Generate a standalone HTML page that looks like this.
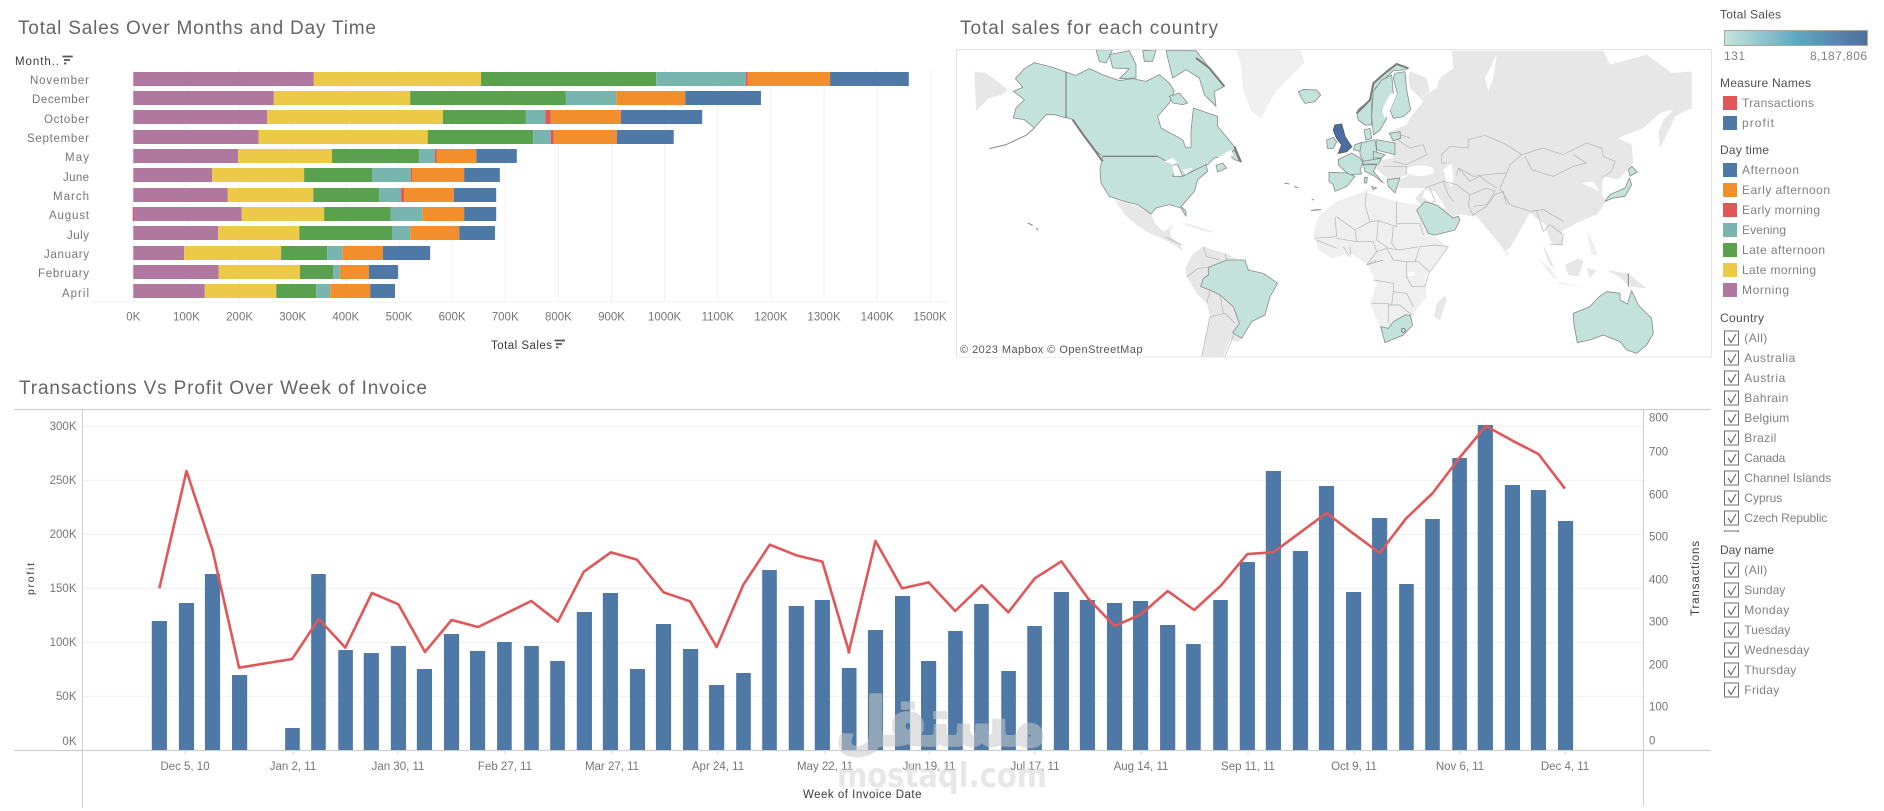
<!DOCTYPE html>
<html lang="en"><head><meta charset="utf-8"><title>Sales Dashboard</title>
<style>
html,body{margin:0;padding:0;background:#fff;width:1884px;height:811px;overflow:hidden}
svg{display:block}
text{font-family:"Liberation Sans",sans-serif;font-size:11.5px;fill:#666}
.t{font-size:19px;fill:#666}
.h{font-size:12px;fill:#4f4f4f}
.k{font-size:12px;fill:#808080}
.a{font-size:11.5px;fill:#757575}
.d{font-size:11.5px;fill:#3a3a3a}
.ns{vector-effect:non-scaling-stroke}
.m *{vector-effect:non-scaling-stroke}
.g{fill:#e7e7e7;stroke:none}
.l{fill:#efefef;stroke:none}
.w{fill:#fff;stroke:none}
.c{fill:#c3e2da;stroke:#8a8a8a;stroke-width:.8;stroke-linejoin:round}
.b{fill:none;stroke:#b4b4b4;stroke-width:.7}
.e{fill:none;stroke:#7a7a7a;stroke-width:2}
.cb{fill:#fff;stroke:#6d6d6d;stroke-width:1}
.ck{fill:none;stroke:#6d6d6d;stroke-width:1.2}
</style></head>
<body>
<svg width="1884" height="811" viewBox="0 0 1884 811" xmlns="http://www.w3.org/2000/svg">
<defs><linearGradient id="gr" x1="0" x2="1" y1="0" y2="0"><stop offset="0" stop-color="#c6e4dc"/><stop offset=".5" stop-color="#62a8c0"/><stop offset="1" stop-color="#4e6e9c"/></linearGradient>
<filter id="sf" x="-2%" y="-2%" width="104%" height="104%"><feGaussianBlur stdDeviation=".35"/></filter></defs>
<rect width="1884" height="811" fill="#fff"/>

<!-- titles -->
<text class="t" x="18" y="34" textLength="358">Total Sales Over Months and Day Time</text>
<text class="t" x="960" y="34" textLength="258">Total sales for each country</text>
<text class="t" x="19" y="394" textLength="408">Transactions Vs Profit Over Week of Invoice</text>

<!-- bar chart grid -->
<path d="M133.3 69V302M186.4 69V302M239.6 69V302M292.7 69V302M345.8 69V302M399 69V302M452.1 69V302M505.2 69V302M558.4 69V302M611.5 69V302M664.6 69V302M717.8 69V302M770.9 69V302M824 69V302M877.2 69V302M930.3 69V302M94 302H948" stroke="#f1f1f1" fill="none"/>
<g transform="scale(.60587,.33333)">
<path fill="#b0779f" d="M220 216H518V258H220ZM220 273H452V315H220ZM220 330H441V372H220ZM220 390H427V432H220ZM220 447H393V489H220ZM220 504H350V546H220ZM220 564H376V606H220ZM220 621H399V663H220ZM220 678H360V720H220ZM220 738H304V780H220ZM220 795H361V837H220ZM220 852H338V894H220Z"/>
<path fill="#edc948" d="M518 216H794V258H518ZM452 273H677V315H452ZM441 330H731V372H441ZM427 390H706V432H427ZM393 447H548V489H393ZM350 504H502V546H350ZM376 564H517V606H376ZM399 621H535V663H399ZM360 678H494V720H360ZM304 738H464V780H304ZM361 795H495V837H361ZM338 852H456V894H338Z"/>
<path fill="#59a14f" d="M794 216H1083V258H794ZM677 273H934V315H677ZM731 330H868V372H731ZM706 390H880V432H706ZM548 447H692V489H548ZM502 504H614V546H502ZM517 564H626V606H517ZM535 621H645V663H535ZM494 678H647V720H494ZM464 738H540V780H464ZM495 795H550V837H495ZM456 852H522V894H456Z"/>
<path fill="#79b5af" d="M1083 216H1231V258H1083ZM934 273H1017V315H934ZM868 330H900V372H868ZM880 390H909V432H880ZM692 447H718V489H692ZM614 504H678V546H614ZM626 564H662V606H626ZM645 621H697V663H645ZM647 678H677V720H647ZM540 738H565V780H540ZM550 795H561V837H550ZM522 852H545V894H522Z"/>
<path fill="#e15759" d="M1231 216H1234V258H1231ZM900 330H909V372H900ZM909 390H914V432H909ZM718 447H721V489H718ZM678 504H680V546H678ZM662 564H667V606H662ZM219 621H221V663H219Z"/>
<path fill="#f28e2b" d="M1234 216H1370V258H1234ZM1017 273H1131V315H1017ZM909 330H1025V372H909ZM914 390H1018V432H914ZM721 447H786V489H721ZM680 504H766V546H680ZM667 564H749V606H667ZM697 621H766V663H697ZM677 678H758V720H677ZM565 738H632V780H565ZM561 795H609V837H561ZM545 852H611V894H545Z"/>
<path fill="#4e79a7" d="M1370 216H1500V258H1370ZM1131 273H1256V315H1131ZM1025 330H1159V372H1025ZM1018 390H1112V432H1018ZM786 447H853V489H786ZM766 504H825V546H766ZM749 564H819V606H749ZM766 621H819V663H766ZM758 678H817V720H758ZM632 738H710V780H632ZM609 795H657V837H609ZM611 852H652V894H611Z"/>
</g>
<text class="d" x="15" y="65" textLength="44">Month..</text>
<path d="M62.5 56.500H72.700M64 60H70M64 63.500H66.500" stroke="#555" stroke-width="1.800" fill="none"/>
<g>
<text class="a" x="89" y="84" text-anchor="end" textLength="59">November</text>
<text class="a" x="89" y="103" text-anchor="end" textLength="57">December</text>
<text class="a" x="89" y="123" text-anchor="end" textLength="45">October</text>
<text class="a" x="89" y="142" text-anchor="end" textLength="62">September</text>
<text class="a" x="89" y="161" text-anchor="end" textLength="24">May</text>
<text class="a" x="89" y="181" text-anchor="end" textLength="26">June</text>
<text class="a" x="89" y="200" text-anchor="end" textLength="36">March</text>
<text class="a" x="89" y="219" text-anchor="end" textLength="40">August</text>
<text class="a" x="89" y="239" text-anchor="end" textLength="22">July</text>
<text class="a" x="89" y="258" text-anchor="end" textLength="45">January</text>
<text class="a" x="89" y="277" text-anchor="end" textLength="51">February</text>
<text class="a" x="89" y="297" text-anchor="end" textLength="27">April</text>
</g>
<g text-anchor="middle">
<text class="a" x="133.300" y="320.500">0K</text>
<text class="a" x="186.400" y="320.500">100K</text>
<text class="a" x="239.600" y="320.500">200K</text>
<text class="a" x="292.700" y="320.500">300K</text>
<text class="a" x="345.800" y="320.500">400K</text>
<text class="a" x="399" y="320.500">500K</text>
<text class="a" x="452.100" y="320.500">600K</text>
<text class="a" x="505.200" y="320.500">700K</text>
<text class="a" x="558.400" y="320.500">800K</text>
<text class="a" x="611.500" y="320.500">900K</text>
<text class="a" x="664.600" y="320.500">1000K</text>
<text class="a" x="717.800" y="320.500">1100K</text>
<text class="a" x="770.900" y="320.500">1200K</text>
<text class="a" x="824" y="320.500">1300K</text>
<text class="a" x="877.200" y="320.500">1400K</text>
<text class="a" x="930" y="320.500">1500K</text>
</g>
<text class="d" x="491" y="349" textLength="61">Total Sales</text>
<path d="M554.500 340.500H565M556 344H562M556 347.500H558.500" stroke="#555" stroke-width="1.800" fill="none"/>

<!-- map -->
<rect x="956.500" y="49.500" width="755" height="307.500" fill="#fff" stroke="#e4e4e4"/>
<clipPath id="mc"><rect x="957" y="50" width="754" height="307"/></clipPath>
<g clip-path="url(#mc)"><g class="m" filter="url(#sf)">
<g transform="translate(956,48) scale(.33333)">
<path class="g" d="M55 70L90 75L130 105L155 125L140 140L100 150L60 190Z"/>
<path class="l" d="M840 5L1035 5L1045 45L1000 90L960 130L915 210L885 190L860 120L855 50Z"/>
<path class="c" d="M330 72L290 58L235 44L205 62L178 92L200 118L172 130L205 155L180 180L172 210L205 215L235 240L270 200L295 200L330 210Z"/>
<path d="M235 240L210 262L150 290L100 302" fill="none" stroke="#888" stroke-width="1"/>
<path class="c" d="M330 72L360 82L400 62L440 80L490 98L530 92L570 100L610 80L640 105L655 130L640 165L605 205L615 240L680 275L690 300L705 298L705 250L712 180L755 195L785 205L785 235L835 295L840 320L855 342L820 322L775 330L755 350L720 365L680 385L665 350L640 345L605 325L440 325L415 305L385 265L350 215L330 208Z"/>
<path class="c" d="M640 145L670 135L695 165L680 170L650 165Z"/>
<path class="c" d="M420 5L470 5L450 45L430 40ZM460 20L520 8L540 50L540 90L490 92L520 62L470 60ZM560 8L600 5L590 40L565 40ZM630 8L720 8L760 60L805 115L775 130L780 175L745 140L730 90L690 65L650 90L640 50Z"/>
<path class="c" d="M820 320L835 305L850 340L835 335Z"/>
<path class="c" d="M440 325L605 325L640 345L665 350L650 385L680 385L720 365L750 350L755 370L725 395L715 430L685 465L675 475L690 490L690 505L675 480L640 470L600 480L585 498L545 470L510 462L460 445L435 405L432 365Z"/>
<path class="w" d="M625 340L650 330L665 345L650 350ZM650 355L665 350L655 385ZM680 365L710 360L690 380ZM760 345L800 320L825 305L832 322L800 338L775 350Z"/>
<path class="c" d="M780 352L800 345L812 360L785 372Z"/>
<path class="e" d="M350 215L385 265L415 305L440 340M720 30L760 60L805 115M835 295L855 342"/>
<path d="M330 72V208M440 325H605" stroke="#777" stroke-width="1" fill="none"/>
<path d="M215 525L230 532M240 540L246 546M985 405L1000 408M1015 415L1025 420M1065 488L1095 485" stroke="#888" stroke-width="1" fill="none"/>
</g>
<g transform="translate(1110,190) scale(.33333)">
<path class="g" d="M15 30L85 50L125 75L135 100L160 125L185 110L180 135L210 165L220 185L200 170L165 150L120 130L80 105L45 75Z"/>
<path class="l" d="M205 95L250 105L300 122L320 128L285 125L240 110ZM175 110L190 105L180 125Z"/>
<path class="g" d="M225 235L250 190L280 170L345 190L400 215L420 240L400 440L385 455L360 450L340 500L275 500L300 380L290 340L260 310L230 260Z"/>
<path class="b" d="M165 140L185 150L215 165M280 170L290 200L330 210M345 190L350 210M230 260L265 235L295 232M290 340L300 300M300 380L345 370L375 400M340 370L330 315M345 500L375 425M300 380L275 500"/>
<path class="c" d="M295 232L350 210L405 210L415 240L460 250L503 280L480 320L465 375L425 395L395 445L368 428L388 400L370 350L330 315L300 300L272 290L280 265L295 255Z"/>
<path class="l" d="M610 135L625 80L680 35L760 5L860 35L925 45L960 130L1015 170L975 220L945 260L950 320L910 370L905 400L880 440L825 455L805 400L780 340L800 280L775 225L720 190L665 205L625 180Z"/>
<path class="b" d="M680 80L735 120L780 95L805 92L860 110L860 35M770 0L765 45L780 95M675 80L680 140L612 145M735 120L740 155L680 145M805 92L800 150L835 175L870 180L925 170M860 100L930 100L940 135M850 110L845 160L860 180M740 155L790 155L800 185L770 225L800 210M800 185L830 175L850 210L890 215L890 260M770 225L820 210M915 215L930 170L975 165L1015 170L960 245M890 215L925 215L958 245L945 290L905 290L890 260M790 270L850 280L850 305L890 310L910 350M785 340L835 340L835 400M835 345L870 345L905 375M850 305L845 345M620 150L680 175M700 170L720 200M720 170L722 195"/>
<path class="w" d="M893 248L915 245L912 258L895 258Z"/>
<path class="c" d="M812 410L835 415L850 395L885 375L900 375L908 405L880 435L825 458Z"/>
<circle cx="880" cy="421" r="6" fill="#c3e2da" stroke="#7d7d7d"/>
<path class="g" d="M1005 315L1010 330L990 390L972 380L980 340Z"/>
<path d="M605 62L625 58M605 30L612 28" stroke="#999" fill="none"/>
</g>
<g transform="translate(1310,48) scale(.33333)">
<path class="g" d="M300 70L350 90L360 130L325 155L380 120L390 90L430 60L425 8L880 8L900 50L1010 20L1085 75L1145 70L1145 180L1095 205L1080 240L1050 300L1045 255L1060 215L1090 185L1050 195L1000 240L925 270L965 290L970 345L925 395L880 385L875 440L850 400L815 405L870 430L890 460L860 500L800 525L755 550L760 595L725 590L705 530L660 495L600 600L585 612L570 590L520 530L500 505L450 500L425 505L400 470L375 430L345 425L330 470L315 450L345 420L265 420L270 395L300 380L275 385L240 415L230 390L190 355L160 345L250 330L240 250L290 230L300 210L340 160L300 120L295 90Z"/>
<ellipse cx="330" cy="368" rx="42" ry="16" fill="#fff"/>
<path class="w" d="M400 365L425 345L430 390L425 418L410 400Z"/>
<path class="w" d="M525 90L560 20L550 90L535 130Z"/>
<path class="b" d="M395 320L420 295L475 300L475 275L525 262L590 290L635 320L600 350L590 375L530 380L490 385L445 360L440 385M635 320L700 300L760 320L830 285L875 300L880 325L915 340L905 370L875 390M645 325L665 365L730 385L790 355L830 345L790 320M590 375L570 420L600 470L660 490L700 485L760 520M445 360L480 400L510 385L530 400L560 420M400 400L440 410L480 440L475 470L490 505M480 440L530 420L555 430L530 470L490 475M490 500L530 475L555 440L580 430L590 470M345 420L400 400L415 440L430 460M360 420L375 460L340 470M250 340L290 350L350 320L340 290L300 300L255 270M220 355L290 355L290 375M270 260L300 270M680 490L700 550L720 530L760 560L755 590L720 590M395 320L395 345L410 345"/>
<path class="g" d="M330 445L430 495L450 520L370 565L335 520Z"/>
<path class="c" d="M85 335L125 315L150 330L160 345L150 365L155 378L120 380L105 370L85 350Z"/>
<path class="c" d="M57 373L110 375L135 385L110 415L75 430L70 410L57 400Z"/>
<path class="c" d="M150 285L195 275L200 310L190 335L160 340L150 320Z"/>
<path class="c" d="M200 275L255 285L255 320L215 310L200 305Z"/>
<path class="c" d="M190 310L225 320L215 330L190 330ZM160 340L215 330L205 348L155 348Z"/>
<path class="c" d="M160 350L200 350L190 370L220 405L195 385L165 370ZM185 415L200 420L190 425ZM163 388L172 388L170 405L163 405Z"/>
<path class="c" d="M135 290L155 283L150 310L130 305Z"/>
<path class="c" d="M232 395L270 390L255 435L235 415Z"/>
<path class="c" d="M955 365L965 355L982 372L960 385ZM885 460L900 440L945 420L958 390L965 410L945 445L910 450Z"/>
</g>
<g transform="translate(1290,50) scale(.33333)">
<path class="c" d="M200 190L205 178L240 150L250 100L290 65L320 42L355 55L340 60L310 62L285 85L255 115L245 160L245 225L225 225L205 210Z"/>
<path class="c" d="M305 75L310 130L275 180L290 205L270 240L250 255L245 200L250 125L275 90Z"/>
<path class="c" d="M315 70L345 65L350 120L362 180L340 200L310 205L300 180L322 130L310 85Z"/>
<path class="w" d="M300 180L322 130L302 130L275 180L285 205Z"/>
<path class="c" d="M222 240L240 235L245 265L228 270Z"/>
<path class="c" d="M25 125L40 118L80 120L92 135L75 155L45 160L35 145Z"/>
<path class="c" d="M298 250L330 245L332 265L310 272Z"/>
<path class="c" d="M110 270L130 262L140 275L130 295L112 295Z"/>
<path fill="#4a6ea5" stroke="#5a5a5a" stroke-width="1" d="M135 225L155 222L165 260L185 290L170 305L145 310L155 285L140 265L130 240Z"/>
<path class="e" d="M200 190L240 150L250 100L290 65L320 42L355 55"/>
</g>
<g transform="translate(1110,190) scale(.33333)">
<path class="c" d="M920 60L945 35L980 45L1030 85L1045 78L1050 90L1035 120L975 135L955 130Z"/>
</g>
<g transform="translate(1500,190) scale(.33333)">
<path class="l" d="M115 205L150 235L175 270L155 260ZM175 275L265 295L175 280ZM265 125L280 160L295 195L275 195L265 150Z"/>
<path class="g" d="M130 165L145 195L165 235L150 225L135 190ZM195 225L235 205L250 215L235 260L205 255ZM260 235L290 240L270 265ZM320 240L385 250L440 295L390 290L355 260ZM20 185L28 195L18 195Z"/>
<path d="M385 250V290" stroke="#888" fill="none"/>
<path class="c" d="M220 370L270 350L295 322L320 305L360 310L360 330L382 342L395 302L415 345L455 385L460 430L440 465L410 490L380 480L360 455L310 435L270 450L232 458L222 405Z"/>
</g>
</g></g>
<rect x="957" y="341" width="188" height="16" fill="#fff" opacity=".75"/>
<text x="960" y="353" textLength="182.500" style="font-size:11px;fill:#555">© 2023 Mapbox  © OpenStreetMap</text>

<!-- lower chart -->
<path d="M83 426.300H1643M83 480.300H1643M83 534.300H1643M83 588.300H1643M83 642.300H1643M83 696.300H1643" stroke="#f1f1f1" stroke-width="1.200" fill="none"/>
<path d="M14 409.500H1711M14 750.500H1711" stroke="#cfcfcf" stroke-width="1.200" fill="none"/>
<path d="M82.500 409V808M1643.500 409V806" stroke="#cfcfcf" fill="none"/>
<path d="M185 750V755M293 750V755M398 750V755M505 750V755M612 750V755M718 750V755M825 750V755M929 750V755M1035 750V755M1141 750V755M1248 750V755M1354 750V755M1460 750V755M1565 750V755" stroke="#ddd" fill="none"/>
<g transform="translate(0,370) scale(.54209,.33333)" fill="#4e79a7">
<path d="M280 753H308V1140H280ZM330 699H358V1140H330ZM378 612H406V1140H378ZM428 915H456V1140H428ZM526 1074H553V1140H526ZM574 612H601V1140H574ZM624 840H651V1140H624ZM671 849H699V1140H671ZM721 828H749V1140H721ZM769 897H797V1140H769ZM819 792H847V1140H819ZM867 843H895V1140H867ZM917 816H944V1140H917ZM967 828H994V1140H967ZM1015 873H1042V1140H1015ZM1064 726H1092V1140H1064ZM1112 669H1140V1140H1112ZM1162 897H1190V1140H1162ZM1210 762H1238V1140H1210ZM1260 837H1288V1140H1260ZM1308 945H1336V1140H1308ZM1358 909H1385V1140H1358ZM1406 600H1433V1140H1406ZM1455 708H1483V1140H1455ZM1503 690H1531V1140H1503ZM1553 894H1580V1140H1553Z"/>
<polyline class="ns" fill="none" stroke="#e15759" stroke-width="2.600" stroke-linejoin="round" points="294,655 344,303 392,540 441,893 539,867 588,747 637,833 686,669 735,703 784,846 833,750 882,771 980,693 1029,755 1077,605 1127,547 1175,569 1224,667 1273,694 1322,831 1371,645 1420,524 1469,556 1517,575 1567,850"/>
</g>
<g transform="translate(850,370) scale(.54209,.33333)" fill="#4e79a7">
<path d="M33 780H61V1140H33ZM83 678H111V1140H83ZM131 873H159V1140H131ZM181 783H208V1140H181ZM229 702H256V1140H229ZM279 903H306V1140H279ZM327 768H354V1140H327ZM376 666H404V1140H376ZM424 690H452V1140H424ZM474 699H502V1140H474ZM522 693H550V1140H522ZM572 765H600V1140H572ZM620 822H647V1140H620ZM670 690H697V1140H670ZM719 576H747V1140H719ZM767 303H795V1140H767ZM817 543H845V1140H817ZM865 348H893V1140H865ZM915 666H943V1140H915ZM963 444H991V1140H963ZM1013 642H1040V1140H1013ZM1061 447H1088V1140H1061ZM1111 264H1138V1140H1111ZM1158 165H1186V1140H1158ZM1208 345H1236V1140H1208ZM1256 360H1284V1140H1256ZM1306 453H1334V1140H1306Z"/>
<polyline class="ns" fill="none" stroke="#e15759" stroke-width="2.600" stroke-linejoin="round" points="-3,850 47,513 96,655 145,637 194,723 243,646 292,727 341,625 390,574 439,685 488,768 537,733 586,663 635,720 684,647 733,552 781,547 830,488 879,429 928,490 977,549 1026,445 1075,369 1124,264 1173,168 1222,212 1270,252 1319,356"/>
</g>
<g text-anchor="end">
<text class="a" x="76.500" y="430">300K</text>
<text class="a" x="76.500" y="484">250K</text>
<text class="a" x="76.500" y="538">200K</text>
<text class="a" x="76.500" y="592">150K</text>
<text class="a" x="76.500" y="646">100K</text>
<text class="a" x="76.500" y="700">50K</text>
<text class="a" x="76.500" y="745">0K</text>
</g>
<text class="a" x="1649" y="421.500">800</text>
<text class="a" x="1649" y="455.500">700</text>
<text class="a" x="1649" y="498.500">600</text>
<text class="a" x="1649" y="540.500">500</text>
<text class="a" x="1649" y="583.500">400</text>
<text class="a" x="1649" y="625.500">300</text>
<text class="a" x="1649" y="668.500">200</text>
<text class="a" x="1649" y="710.500">100</text>
<text class="a" x="1649" y="744.500">0</text>
<g text-anchor="middle">
<text class="a" x="185" y="770">Dec 5, 10</text>
<text class="a" x="293" y="770">Jan 2, 11</text>
<text class="a" x="398" y="770">Jan 30, 11</text>
<text class="a" x="505" y="770">Feb 27, 11</text>
<text class="a" x="612" y="770">Mar 27, 11</text>
<text class="a" x="718" y="770">Apr 24, 11</text>
<text class="a" x="825" y="770">May 22, 11</text>
<text class="a" x="929" y="770">Jun 19, 11</text>
<text class="a" x="1035" y="770">Jul 17, 11</text>
<text class="a" x="1141" y="770">Aug 14, 11</text>
<text class="a" x="1248" y="770">Sep 11, 11</text>
<text class="a" x="1354" y="770">Oct 9, 11</text>
<text class="a" x="1460" y="770">Nov 6, 11</text>
<text class="a" x="1565" y="770">Dec 4, 11</text>
</g>
<text class="d" x="803" y="798" textLength="118.500">Week of Invoice Date</text>
<text class="d" transform="translate(34,595) rotate(-90)" textLength="32" style="font-size:10.500px">profit</text>
<text class="d" transform="translate(1699,616) rotate(-90)" textLength="75">Transactions</text>

<!-- watermark -->
<g opacity=".55">
<text x="941" y="745" text-anchor="middle" textLength="210" lengthAdjust="spacingAndGlyphs" style="font-family:'DejaVu Sans',sans-serif;font-weight:bold;font-size:66px;fill:#c9c9c9;stroke:#c9c9c9;stroke-width:3.500px;stroke-linejoin:round">مستقل</text>
<text x="837" y="787" textLength="210" lengthAdjust="spacingAndGlyphs" style="font-family:'DejaVu Sans',sans-serif;font-weight:bold;font-size:34px;fill:#d4d4d4">mostaql.com</text>
</g>

<!-- legends -->
<text class="h" x="1720" y="18.500" textLength="61">Total Sales</text>
<rect x="1724.500" y="30.500" width="143" height="15" fill="url(#gr)" stroke="#aaa69c"/>
<text class="k" x="1724" y="60" textLength="21">131</text>
<text class="k" x="1867" y="60" text-anchor="end" textLength="57">8,187,806</text>
<text class="h" x="1720" y="87" textLength="91">Measure Names</text>
<rect x="1723" y="96" width="14" height="14" fill="#e15759"/><text class="k" x="1742" y="107" textLength="72">Transactions</text>
<rect x="1723" y="116" width="14" height="14" fill="#4e79a7"/><text class="k" x="1742" y="127" textLength="32">profit</text>
<text class="h" x="1720" y="154" textLength="49">Day time</text>
<rect x="1723" y="163" width="14" height="14" fill="#4e79a7"/><text class="k" x="1742" y="174" textLength="57">Afternoon</text>
<rect x="1723" y="183" width="14" height="14" fill="#f28e2b"/><text class="k" x="1742" y="194" textLength="88">Early afternoon</text>
<rect x="1723" y="203" width="14" height="14" fill="#e15759"/><text class="k" x="1742" y="214" textLength="78">Early morning</text>
<rect x="1723" y="223" width="14" height="14" fill="#79b5af"/><text class="k" x="1742" y="234" textLength="44">Evening</text>
<rect x="1723" y="243" width="14" height="14" fill="#59a14f"/><text class="k" x="1742" y="254" textLength="83">Late afternoon</text>
<rect x="1723" y="263" width="14" height="14" fill="#edc948"/><text class="k" x="1742" y="274" textLength="74">Late morning</text>
<rect x="1723" y="283" width="14" height="14" fill="#b0779f"/><text class="k" x="1742" y="294" textLength="47">Morning</text>
<text class="h" x="1720" y="322" textLength="44">Country</text>
<g>
<rect class="cb" x="1724.500" y="331" width="14" height="14"/><path class="ck" d="M1728 338L1731 342.500L1736 334"/><text class="k" x="1744.300" y="342" textLength="23">(All)</text>
<rect class="cb" x="1724.500" y="351" width="14" height="14"/><path class="ck" d="M1728 358L1731 362.500L1736 354"/><text class="k" x="1744.300" y="362" textLength="51">Australia</text>
<rect class="cb" x="1724.500" y="371" width="14" height="14"/><path class="ck" d="M1728 378L1731 382.500L1736 374"/><text class="k" x="1744.300" y="382" textLength="41">Austria</text>
<rect class="cb" x="1724.500" y="391" width="14" height="14"/><path class="ck" d="M1728 398L1731 402.500L1736 394"/><text class="k" x="1744.300" y="402" textLength="44">Bahrain</text>
<rect class="cb" x="1724.500" y="411" width="14" height="14"/><path class="ck" d="M1728 418L1731 422.500L1736 414"/><text class="k" x="1744.300" y="422" textLength="45">Belgium</text>
<rect class="cb" x="1724.500" y="431" width="14" height="14"/><path class="ck" d="M1728 438L1731 442.500L1736 434"/><text class="k" x="1744.300" y="442" textLength="32">Brazil</text>
<rect class="cb" x="1724.500" y="451" width="14" height="14"/><path class="ck" d="M1728 458L1731 462.500L1736 454"/><text class="k" x="1744.300" y="462" textLength="41">Canada</text>
<rect class="cb" x="1724.500" y="471" width="14" height="14"/><path class="ck" d="M1728 478L1731 482.500L1736 474"/><text class="k" x="1744.300" y="482" textLength="87">Channel Islands</text>
<rect class="cb" x="1724.500" y="491" width="14" height="14"/><path class="ck" d="M1728 498L1731 502.500L1736 494"/><text class="k" x="1744.300" y="502" textLength="38">Cyprus</text>
<rect class="cb" x="1724.500" y="511" width="14" height="14"/><path class="ck" d="M1728 518L1731 522.500L1736 514"/><text class="k" x="1744.300" y="522" textLength="83">Czech Republic</text>
<path d="M1724.500 532V531H1738.500V532" fill="none" stroke="#6d6d6d"/>
</g>
<text class="h" x="1720" y="554" textLength="54">Day name</text>
<rect class="cb" x="1724.500" y="563" width="14" height="14"/><path class="ck" d="M1728 570L1731 574.500L1736 566"/><text class="k" x="1744.300" y="574" textLength="23">(All)</text>
<rect class="cb" x="1724.500" y="583" width="14" height="14"/><path class="ck" d="M1728 590L1731 594.500L1736 586"/><text class="k" x="1744.300" y="594" textLength="41">Sunday</text>
<rect class="cb" x="1724.500" y="603" width="14" height="14"/><path class="ck" d="M1728 610L1731 614.500L1736 606"/><text class="k" x="1744.300" y="614" textLength="45">Monday</text>
<rect class="cb" x="1724.500" y="623" width="14" height="14"/><path class="ck" d="M1728 630L1731 634.500L1736 626"/><text class="k" x="1744.300" y="634" textLength="46">Tuesday</text>
<rect class="cb" x="1724.500" y="643" width="14" height="14"/><path class="ck" d="M1728 650L1731 654.500L1736 646"/><text class="k" x="1744.300" y="654" textLength="65">Wednesday</text>
<rect class="cb" x="1724.500" y="663" width="14" height="14"/><path class="ck" d="M1728 670L1731 674.500L1736 666"/><text class="k" x="1744.300" y="674" textLength="52">Thursday</text>
<rect class="cb" x="1724.500" y="683" width="14" height="14"/><path class="ck" d="M1728 690L1731 694.500L1736 686"/><text class="k" x="1744.300" y="694" textLength="35">Friday</text>
</svg>
</body></html>
